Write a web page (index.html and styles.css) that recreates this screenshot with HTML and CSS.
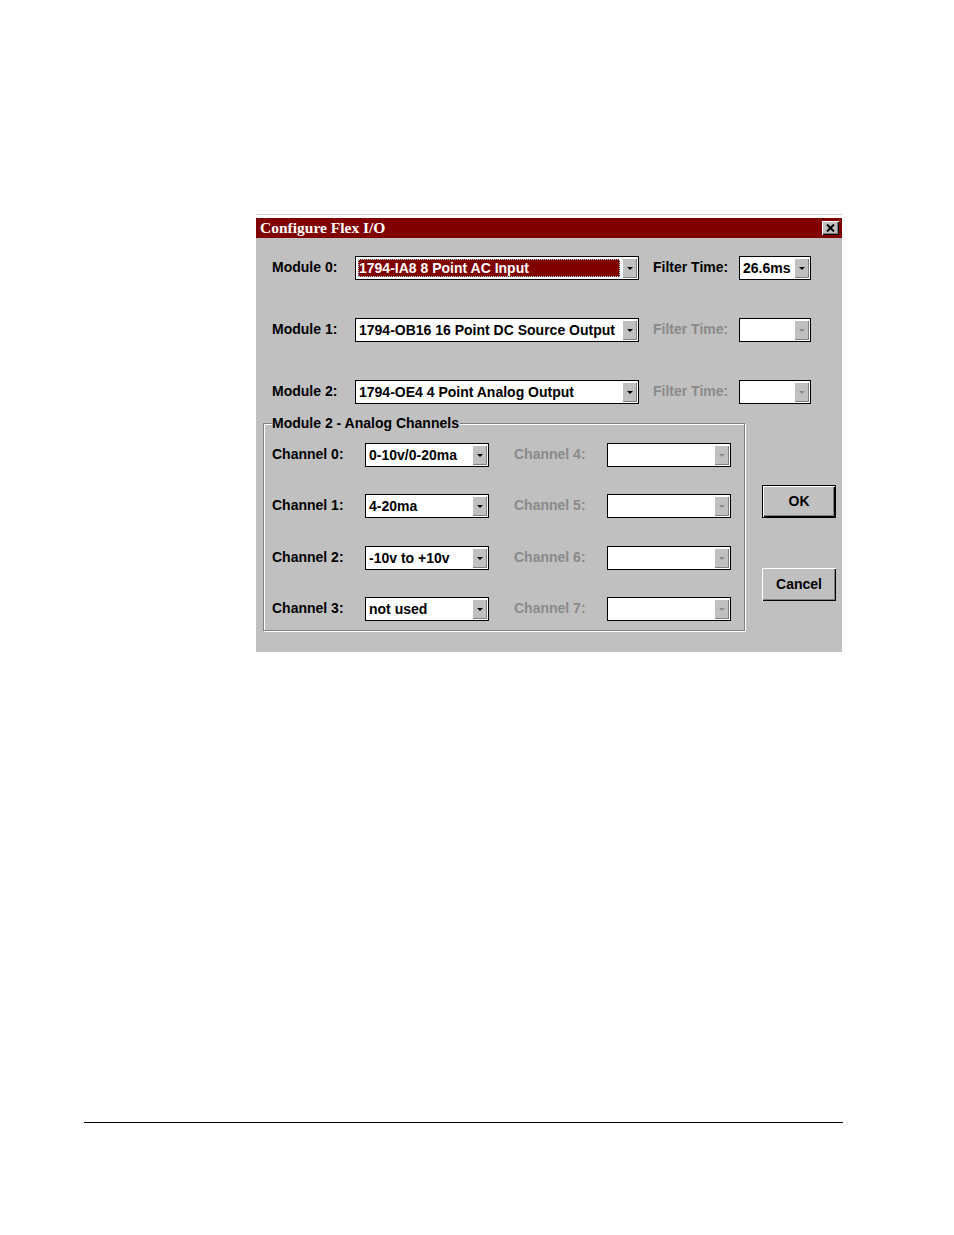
FILE: index.html
```html
<!DOCTYPE html>
<html>
<head>
<meta charset="utf-8">
<title>Configure Flex I/O</title>
<link rel="stylesheet" href="styles.css">
</head>
<body>
<div class="dialog">
  <div class="titlebar">
    <span class="title">Configure Flex I/O</span>
    <span class="close"><svg width="9" height="8" viewBox="0 0 9 8"><path d="M1 0.5 L8 7.5 M8 0.5 L1 7.5" stroke="#000" stroke-width="2"/></svg></span>
  </div>
  <div class="body">
    <div class="modules">
      <div class="mrow">
        <span class="mlabel">Module 0:</span>
        <div class="combo mcombo"><span class="val selected">1794-IA8 8 Point AC Input</span><span class="btn"><i class="arrow"></i></span></div>
        <span class="flabel">Filter Time:</span>
        <div class="combo fcombo"><span class="val">26.6ms</span><span class="btn"><i class="arrow"></i></span></div>
      </div>
      <div class="mrow">
        <span class="mlabel">Module 1:</span>
        <div class="combo mcombo"><span class="val">1794-OB16 16 Point DC Source Output</span><span class="btn"><i class="arrow"></i></span></div>
        <span class="flabel disabled">Filter Time:</span>
        <div class="combo fcombo"><span class="val"></span><span class="btn"><i class="arrow off"></i></span></div>
      </div>
      <div class="mrow">
        <span class="mlabel">Module 2:</span>
        <div class="combo mcombo"><span class="val">1794-OE4 4 Point Analog Output</span><span class="btn"><i class="arrow"></i></span></div>
        <span class="flabel disabled">Filter Time:</span>
        <div class="combo fcombo"><span class="val"></span><span class="btn"><i class="arrow off"></i></span></div>
      </div>
    </div>
    <div class="lower">
      <div class="group">
        <span class="gtitle">Module 2 - Analog Channels</span>
        <div class="crows">
          <div class="crow">
            <span class="clabel">Channel 0:</span>
            <div class="combo ccombo"><span class="val">0-10v/0-20ma</span><span class="btn"><i class="arrow"></i></span></div>
            <span class="clabel right disabled">Channel 4:</span>
            <div class="combo ccombo"><span class="val"></span><span class="btn"><i class="arrow off"></i></span></div>
          </div>
          <div class="crow">
            <span class="clabel">Channel 1:</span>
            <div class="combo ccombo"><span class="val">4-20ma</span><span class="btn"><i class="arrow"></i></span></div>
            <span class="clabel right disabled">Channel 5:</span>
            <div class="combo ccombo"><span class="val"></span><span class="btn"><i class="arrow off"></i></span></div>
          </div>
          <div class="crow">
            <span class="clabel">Channel 2:</span>
            <div class="combo ccombo"><span class="val">-10v to +10v</span><span class="btn"><i class="arrow"></i></span></div>
            <span class="clabel right disabled">Channel 6:</span>
            <div class="combo ccombo"><span class="val"></span><span class="btn"><i class="arrow off"></i></span></div>
          </div>
          <div class="crow">
            <span class="clabel">Channel 3:</span>
            <div class="combo ccombo"><span class="val">not used</span><span class="btn"><i class="arrow"></i></span></div>
            <span class="clabel right disabled">Channel 7:</span>
            <div class="combo ccombo"><span class="val"></span><span class="btn"><i class="arrow off"></i></span></div>
          </div>
        </div>
      </div>
      <div class="buttons">
        <div class="button default">OK</div>
        <div class="button cancel">Cancel</div>
      </div>
    </div>
  </div>
</div>
<div class="rule"></div>
</body>
</html>
```

FILE: styles.css
```css
html, body {
  margin: 0;
  padding: 0;
  background: #fff;
}
body {
  font-family: "Liberation Sans", Arial, sans-serif;
  font-size: 14px;
  font-weight: bold;
  color: #000;
}
.dialog {
  width: 586px;
  margin: 214px 0 0 256px;
  border-top: 1px solid #cfcfcf;
  padding-top: 3px;
}
.titlebar {
  height: 20px;
  background: #800000;
  display: flex;
  align-items: center;
  justify-content: space-between;
  padding: 0 3px 0 4px;
}
.title {
  font-family: "Liberation Serif", "Times New Roman", serif;
  font-size: 15.5px;
  font-weight: bold;
  color: #fff;
  line-height: 20px;
}
.close {
  width: 17px;
  height: 14px;
  box-sizing: border-box;
  background: #c0c0c0;
  box-shadow: inset 1px 1px #fff, inset -1px -1px #000, inset -2px -2px #808080;
  display: flex;
  align-items: center;
  justify-content: center;
}
.body {
  background: #c0c0c0;
  height: 414px;
  box-sizing: border-box;
  padding: 18px 0 0 0;
}
.modules {
  display: flex;
  flex-direction: column;
  gap: 38px;
  padding-left: 16px;
}
.mrow {
  display: flex;
  align-items: center;
  height: 24px;
}
.mlabel {
  width: 83px;
  margin-top: -2px;
}
.flabel {
  width: 86px;
  margin-left: 14px;
  margin-top: -2px;
}
.disabled {
  color: #8a8a8a;
}
.combo {
  display: flex;
  height: 24px;
  box-sizing: border-box;
  border: 1px solid #000;
  background: #fff;
}
.mcombo { width: 284px; }
.fcombo { width: 72px; }
.ccombo { width: 124px; }
.val {
  flex: 1;
  min-width: 0;
  white-space: nowrap;
  overflow: hidden;
  line-height: 20px;
  padding-left: 3px;
  margin: 1px 0;
}
.val.selected {
  background: #800000;
  color: #fff;
  margin: 2px 1px 2px 2px;
  padding-left: 1px;
  line-height: 18px;
  outline: 1px dotted #9fe0e0;
  outline-offset: -1px;
}
.btn {
  width: 15px;
  margin: 1px;
  background: #c0c0c0;
  box-shadow: inset 1px 1px #fff, inset -1px -1px #808080;
  display: flex;
  align-items: center;
  justify-content: center;
}
.arrow {
  width: 0;
  height: 0;
  border-left: 3px solid transparent;
  border-right: 3px solid transparent;
  border-top: 3px solid #000;
  margin-top: 1px;
}
.arrow.off {
  border-top-color: #8a8a8a;
}
.lower {
  display: flex;
  align-items: flex-start;
  margin-top: 19px;
  padding-left: 7px;
}
.group {
  width: 482px;
  box-sizing: border-box;
  border: 1px solid #808080;
  box-shadow: inset 1px 1px #fff, 1px 1px #fff;
  padding: 0 0 9px 8px;
}
.gtitle {
  display: block;
  width: max-content;
  margin: -9px 0 0 0;
  padding: 0 1px 0 0;
  line-height: 16px;
  background: #c0c0c0;
}
.crows {
  display: flex;
  flex-direction: column;
  gap: 27.4px;
  margin-top: 12px;
}
.crow {
  display: flex;
  align-items: center;
  height: 24px;
}
.clabel {
  width: 93px;
  margin-top: -2px;
}
.clabel.right {
  margin-left: 25px;
}
.buttons {
  display: flex;
  flex-direction: column;
  margin-left: 17px;
  padding-top: 62px;
  gap: 50px;
}
.button {
  width: 74px;
  height: 33px;
  box-sizing: border-box;
  background: #c0c0c0;
  display: flex;
  align-items: center;
  justify-content: center;
  padding-bottom: 2px;
}
.button.default {
  border: 1px solid #000;
  box-shadow: inset 1px 1px #fff, inset -1px -1px #000, inset -2px -2px #808080;
}
.button.cancel {
  box-shadow: inset 1px 1px #fff, inset -1px -1px #000, inset -2px -2px #808080;
}
.rule {
  width: 759px;
  height: 1px;
  background: #000;
  margin: 470px 0 0 84px;
}
```
